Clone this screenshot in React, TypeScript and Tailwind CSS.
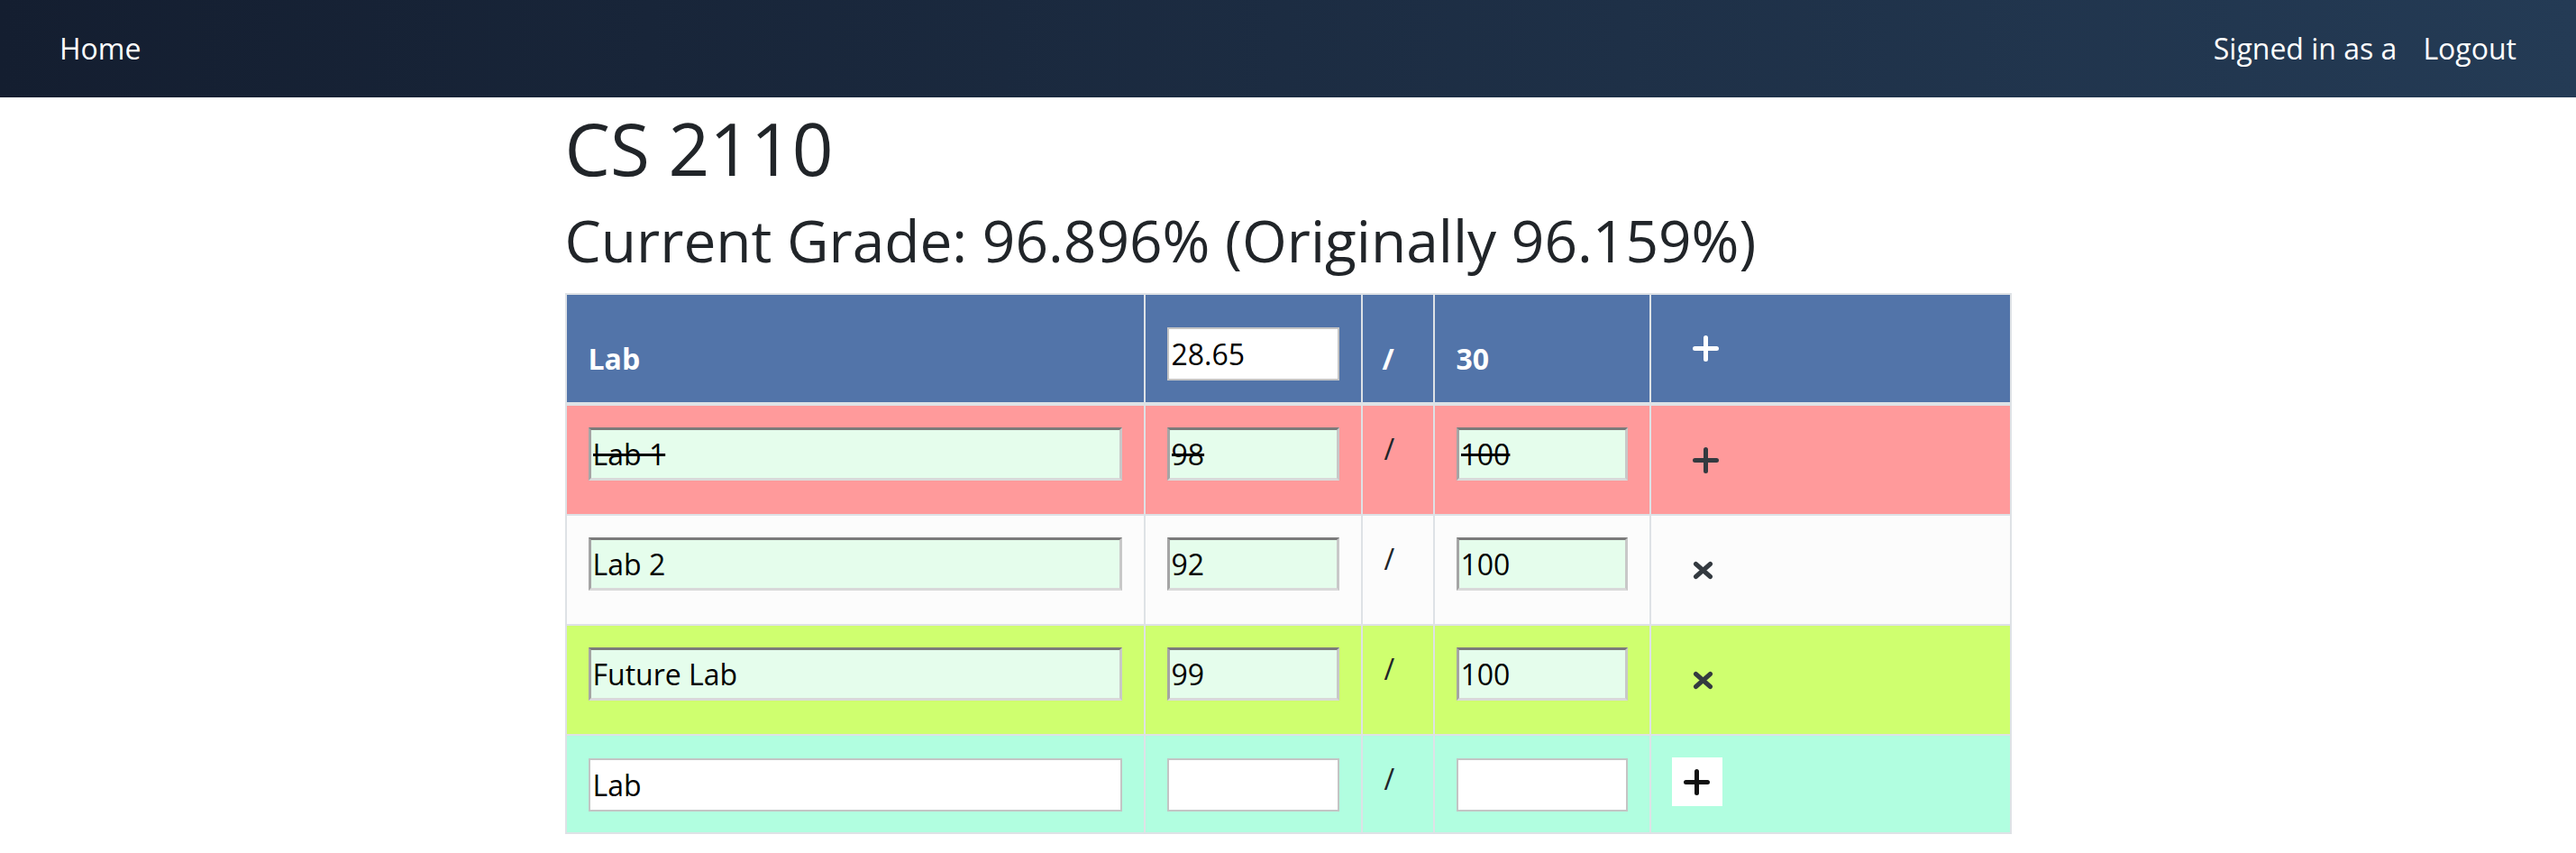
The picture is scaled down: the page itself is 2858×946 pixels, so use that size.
import React from "react";

type Row = {
  name: string;
  score: string;
  total: string;
  bg: string;
  dropped?: boolean;
};

const rows: Row[] = [
  { name: "Lab 1", score: "98", total: "100", bg: "bg-[#ff9a9b]", dropped: true },
  { name: "Lab 2", score: "92", total: "100", bg: "bg-[#fcfcfc]" },
  { name: "Future Lab", score: "99", total: "100", bg: "bg-[#cfff6f]" },
];

const cols = "grid grid-cols-[640px_239px_78px_238px_398px] gap-x-[2px]";

function PlusIcon({ color }: { color: string }) {
  return (
    <svg width="29" height="29" viewBox="0 0 29 29">
      <path
        d="M2.5 14.5h24M14.5 2.5v24"
        stroke={color}
        strokeWidth="5"
        strokeLinecap="round"
        fill="none"
      />
    </svg>
  );
}

function TimesIcon() {
  return (
    <svg width="23" height="21" viewBox="0 0 23 21">
      <path
        d="M3.5 3.5l16 14M19.5 3.5l-16 14"
        stroke="#343a40"
        strokeWidth="5"
        strokeLinecap="round"
        fill="none"
      />
    </svg>
  );
}

const greenInput =
  "block h-[59px] w-full bg-[#e5fdec] border-[3px] border-t-[#7b7b7b] border-l-[#a5a5a5] border-r-[#c8c8c8] border-b-[#d9d9d9] px-[2px] text-[32px] text-black outline-none";
const whiteInput =
  "block h-[59px] w-full bg-white border-2 border-[#c4c4c4] px-[3px] text-[32px] text-black outline-none";

export default function App() {
  return (
    <div className="min-h-screen bg-white font-['Open_Sans',sans-serif] text-[#212529]">
      {/* Navbar */}
      <nav className="flex h-[108px] items-center justify-between bg-linear-to-r from-[#141e30] to-[#243b55] pl-[66px] pr-[66px] text-[32px] text-white">
        <span>Home</span>
        <div className="flex items-center gap-[29px]">
          <span>Signed in as a</span>
          <span>Logout</span>
        </div>
      </nav>

      <main className="mx-auto w-[1605px]">
        <h1 className="mt-[8px] mb-[16px] text-[80px] leading-[96px] font-normal">CS 2110</h1>
        <h2 className="mb-[20px] text-[64px] leading-[77px] font-normal">
          Current Grade: 96.896% (Originally 96.159%)
        </h2>

        {/* Grades table */}
        <div className="flex flex-col gap-[2px] border-2 border-[#dee2e6] bg-[#dee2e6] text-[32px]">
          {/* Header */}
          <div className={`${cols} mb-[2px] h-[119px] font-bold text-white`}>
            <div className="flex items-end bg-[#5274a9] px-[24px] pb-[24px] leading-[48px]">Lab</div>
            <div className="flex items-end bg-[#5274a9] px-[24px] pb-[24px]">
              <input defaultValue="28.65" className={`${whiteInput} font-normal`} />
            </div>
            <div className="flex items-end bg-[#5274a9] pl-[22px] pb-[24px] leading-[48px]">/</div>
            <div className="flex items-end bg-[#5274a9] px-[24px] pb-[24px] leading-[48px]">30</div>
            <div className="flex items-end bg-[#5274a9] px-[24px] pb-[24px]">
              <button className="flex h-[72px] items-center px-[22px]">
                <PlusIcon color="#ffffff" />
              </button>
            </div>
          </div>

          {/* Assignment rows */}
          {rows.map((r) => (
            <div key={r.name} className={`${cols} h-[120px]`}>
              <div className={`${r.bg} px-[24px] pt-[24px]`}>
                <input
                  defaultValue={r.name}
                  className={`${greenInput} ${r.dropped ? "line-through" : ""}`}
                />
              </div>
              <div className={`${r.bg} px-[24px] pt-[24px]`}>
                <input
                  defaultValue={r.score}
                  className={`${greenInput} ${r.dropped ? "line-through" : ""}`}
                />
              </div>
              <div className={`${r.bg} pl-[24px] pt-[24px] leading-[48px]`}>/</div>
              <div className={`${r.bg} px-[24px] pt-[24px]`}>
                <input
                  defaultValue={r.total}
                  className={`${greenInput} ${r.dropped ? "line-through" : ""}`}
                />
              </div>
              <div className={`${r.bg} px-[24px] pt-[24px]`}>
                <button className="flex h-[72px] items-center px-[22px]">
                  {r.dropped ? <PlusIcon color="#343a40" /> : <TimesIcon />}
                </button>
              </div>
            </div>
          ))}

          {/* New assignment row */}
          <div className={`${cols} h-[107px]`}>
            <div className="bg-[#b1fee0] px-[24px] pt-[25px]">
              <input defaultValue="Lab" className={whiteInput} />
            </div>
            <div className="bg-[#b1fee0] px-[24px] pt-[25px]">
              <input defaultValue="" className={whiteInput} />
            </div>
            <div className="bg-[#b1fee0] pl-[24px] pt-[24px] leading-[48px]">/</div>
            <div className="bg-[#b1fee0] px-[24px] pt-[25px]">
              <input defaultValue="" className={whiteInput} />
            </div>
            <div className="bg-[#b1fee0] pl-[23px] pt-[24px]">
              <button className="flex h-[54px] w-[56px] items-center justify-center bg-white">
                <svg width="29" height="29" viewBox="0 0 29 29">
                  <path
                    d="M2.5 14.5h24M14.5 2.5v24"
                    stroke="#111111"
                    strokeWidth="5"
                    strokeLinecap="round"
                    fill="none"
                  />
                </svg>
              </button>
            </div>
          </div>
        </div>
      </main>
    </div>
  );
}
